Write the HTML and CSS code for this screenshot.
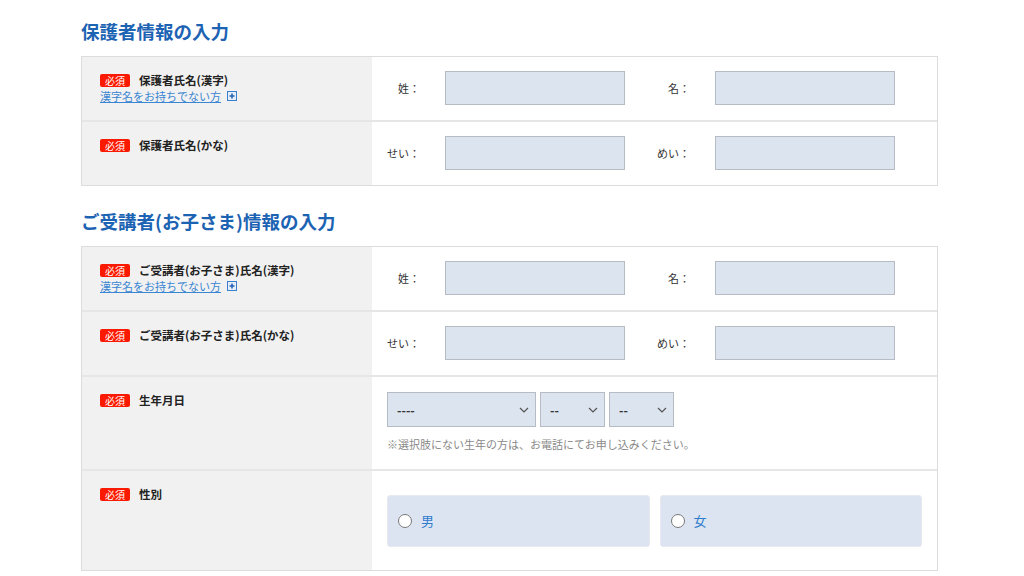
FILE: index.html
```html
<!DOCTYPE html>
<html lang="ja">
<head>
<meta charset="utf-8">
<title>保護者情報の入力</title>
<link rel="stylesheet" href="styles.css">
</head>
<body>
<main class="page">
  <section class="section">
    <h2 class="section-title">保護者情報の入力</h2>
    <div class="form-table">
      <div class="row">
        <div class="head">
          <div class="head-line"><span class="badge">必須</span><span class="label">保護者氏名(漢字)</span></div>
          <div class="sub"><a class="link" href="#">漢字名をお持ちでない方</a><svg class="plus" width="10" height="10" viewBox="0 0 10 10"><rect x="0.5" y="0.5" width="9" height="9" fill="#e6eef9" stroke="#3b7fd0"/><path d="M5 2.5v5M2.5 5h5" stroke="#2664b8" stroke-width="1.6"/></svg></div>
        </div>
        <div class="cell">
          <div class="pair">
            <div class="field"><span class="field-label">姓：</span><input class="text" type="text"></div>
            <div class="field"><span class="field-label">名：</span><input class="text" type="text"></div>
          </div>
        </div>
      </div>
      <div class="row">
        <div class="head">
          <div class="head-line"><span class="badge">必須</span><span class="label">保護者氏名(かな)</span></div>
        </div>
        <div class="cell">
          <div class="pair">
            <div class="field"><span class="field-label">せい：</span><input class="text" type="text"></div>
            <div class="field"><span class="field-label">めい：</span><input class="text" type="text"></div>
          </div>
        </div>
      </div>
    </div>
  </section>

  <section class="section">
    <h2 class="section-title">ご受講者(お子さま)情報の入力</h2>
    <div class="form-table">
      <div class="row">
        <div class="head">
          <div class="head-line"><span class="badge">必須</span><span class="label">ご受講者(お子さま)氏名(漢字)</span></div>
          <div class="sub"><a class="link" href="#">漢字名をお持ちでない方</a><svg class="plus" width="10" height="10" viewBox="0 0 10 10"><rect x="0.5" y="0.5" width="9" height="9" fill="#e6eef9" stroke="#3b7fd0"/><path d="M5 2.5v5M2.5 5h5" stroke="#2664b8" stroke-width="1.6"/></svg></div>
        </div>
        <div class="cell">
          <div class="pair">
            <div class="field"><span class="field-label">姓：</span><input class="text" type="text"></div>
            <div class="field"><span class="field-label">名：</span><input class="text" type="text"></div>
          </div>
        </div>
      </div>
      <div class="row">
        <div class="head">
          <div class="head-line"><span class="badge">必須</span><span class="label">ご受講者(お子さま)氏名(かな)</span></div>
        </div>
        <div class="cell">
          <div class="pair">
            <div class="field"><span class="field-label">せい：</span><input class="text" type="text"></div>
            <div class="field"><span class="field-label">めい：</span><input class="text" type="text"></div>
          </div>
        </div>
      </div>
      <div class="row">
        <div class="head">
          <div class="head-line"><span class="badge">必須</span><span class="label">生年月日</span></div>
        </div>
        <div class="cell cell-date">
          <div class="selects">
            <span class="sel-wrap sel-year"><select class="sel"><option>----</option></select><svg class="chev" width="10" height="6" viewBox="0 0 10 6"><path d="M1 1l4 4 4-4" fill="none" stroke="#555" stroke-width="1.2"/></svg></span>
            <span class="sel-wrap sel-small"><select class="sel"><option>--</option></select><svg class="chev" width="10" height="6" viewBox="0 0 10 6"><path d="M1 1l4 4 4-4" fill="none" stroke="#555" stroke-width="1.2"/></svg></span>
            <span class="sel-wrap sel-small"><select class="sel"><option>--</option></select><svg class="chev" width="10" height="6" viewBox="0 0 10 6"><path d="M1 1l4 4 4-4" fill="none" stroke="#555" stroke-width="1.2"/></svg></span>
          </div>
          <p class="note">※選択肢にない生年の方は、お電話にてお申し込みください。</p>
        </div>
      </div>
      <div class="row">
        <div class="head">
          <div class="head-line"><span class="badge">必須</span><span class="label">性別</span></div>
        </div>
        <div class="cell cell-gender">
          <div class="radios">
            <label class="radio-box"><input type="radio" name="sex"><span>男</span></label>
            <label class="radio-box"><input type="radio" name="sex"><span>女</span></label>
          </div>
        </div>
      </div>
    </div>
  </section>
</main>
</body>
</html>
```

FILE: styles.css
```css
* { box-sizing: border-box; }
html, body { margin: 0; padding: 0; background: #fff; }
body {
  font-family: "Noto Sans CJK JP", "Noto Sans", sans-serif;
  color: #222;
  font-size: 11px;
  line-height: 1.3;
}
.page {
  width: 857px;
  margin-left: 81px;
  padding-top: 18px;
}
.section + .section { margin-top: 22px; }
.section-title {
  margin: 0 0 12px;
  font-size: 18.5px;
  line-height: 26px;
  font-weight: 700;
  color: #1d63b3;
}
.form-table {
  border: 1px solid #dcdcdc;
}
.row {
  display: flex;
}
.row + .row { border-top: 2px solid #e6e6e6; }
.head {
  width: 290px;
  flex: none;
  background: #f1f1f1;
  padding: 16px 18px 8px;
}
.head-line {
  display: flex;
  align-items: center;
  height: 14px;
}
.badge {
  display: inline-block;
  width: 30px;
  height: 13px;
  line-height: 13px;
  background: #fb1a00;
  color: #fff;
  font-size: 10px;
  text-align: center;
  border-radius: 2px;
  margin-right: 9px;
}
.label {
  font-weight: 700;
  font-size: 11.5px;
  color: #222;
}
.sub {
  margin-top: 2px;
  height: 14px;
  line-height: 14px;
  display: flex;
  align-items: center;
}
.link {
  color: #3a86d2;
  font-size: 11px;
  text-decoration: underline;
}
.plus {
  flex: none;
  margin-left: 6px;
}
.cell {
  flex: 1;
  padding: 14px 15px 15px;
  background: #fff;
}
.pair {
  display: flex;
  gap: 32px;
}
.field {
  display: flex;
  align-items: center;
}
.field-label {
  width: 33px;
  margin-right: 25px;
  text-align: right;
  color: #333;
  font-size: 11px;
  white-space: nowrap;
}
.text {
  width: 180px;
  height: 34px;
  margin: 0;
  background: #dce4f0;
  border: 1px solid #b7bcc4;
  border-radius: 0;
  padding: 0 8px;
  font: inherit;
}
.cell-date { padding: 15px 15px 17px; }
.selects {
  display: flex;
  gap: 4px;
}
.sel-wrap {
  position: relative;
  display: block;
  height: 35px;
}
.sel-year { width: 149px; }
.sel-small { width: 65px; }
.sel {
  -webkit-appearance: none;
  appearance: none;
  width: 100%;
  height: 35px;
  margin: 0;
  background-color: #dce4f0;
  border: 1px solid #b7bcc4;
  border-radius: 0;
  padding: 0 9px;
  font-family: "Noto Sans CJK JP", sans-serif;
  font-size: 12px;
  font-weight: 700;
  color: #333;
}
.chev {
  position: absolute;
  right: 7px;
  top: 15px;
  pointer-events: none;
}
.note {
  margin: 9px 0 0;
  color: #8a8a8a;
  font-size: 11px;
  line-height: 16px;
}
.cell-gender { padding: 24px 15px 23px; }
.radios {
  display: flex;
  gap: 10px;
}
.radio-box {
  flex: 1;
  height: 52px;
  display: flex;
  align-items: center;
  padding-left: 10px;
  background: #dbe4f0;
  border: 1px solid #e6eaf0;
  border-radius: 3px;
  color: #2f7ccf;
  font-size: 13px;
}
.radio-box input {
  width: 14px;
  height: 14px;
  margin: 0 9px 0 0;
}
```
